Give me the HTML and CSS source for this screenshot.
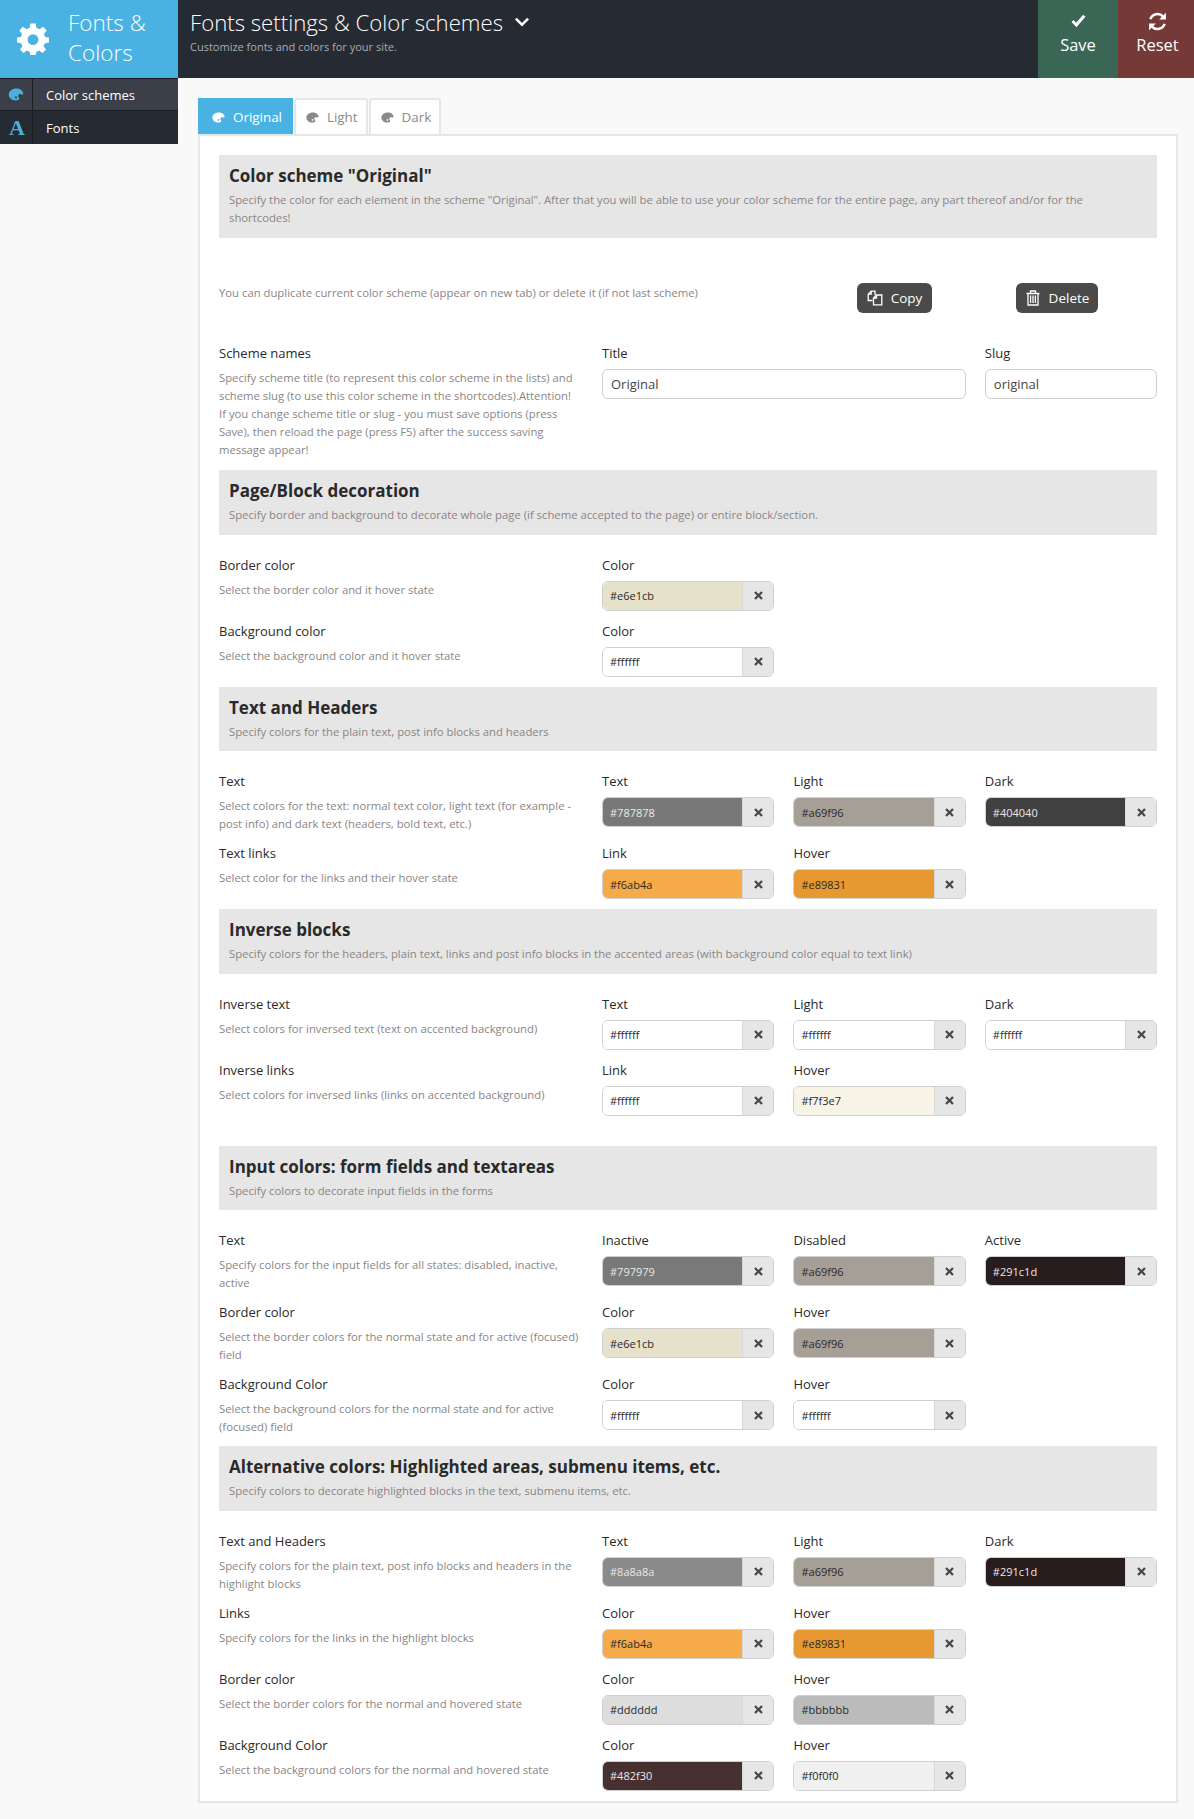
FILE: index.html
```html
<!doctype html>
<html>

<head>
    <meta charset="UTF-8">
    <meta name="viewport" content="width=device-width, initial-scale=1.0">
    <link rel="stylesheet" href="styles.css">
    <title>Fonts &amp; Colors</title>
</head>

<body>
    <svg class="icon-defs" width="0" height="0">
        <symbol id="palette" viewBox="0 0 16 14">
            <path fill-rule="evenodd" d="M8.5 0.5C12.6 0.5 15.6 2.9 15.8 6.2C15.9 7.2 14.8 7.3 14 6.9C12.8 6.3 11.2 6.4 10.6 7.5C10 8.6 10.6 9.6 11.2 10.5C11.8 11.5 11.3 12.6 10 13C9.2 13.3 8.4 13.4 7.6 13.4C3.4 13.4 0.2 10.6 0.2 7C0.2 3.4 3.9 0.5 8.5 0.5ZM8 9A1.1 1.1 0 1 0 8 11.2A1.1 1.1 0 1 0 8 9Z" />
        </symbol>
        <symbol id="cross" viewBox="0 0 10 10">
            <path d="M2 0.2L5 3.2L8 0.2L9.8 2L6.8 5L9.8 8L8 9.8L5 6.8L2 9.8L0.2 8L3.2 5L0.2 2Z" />
        </symbol>
    </svg>

    <header class="topbar">
        <div class="brand">
            <svg class="brand-gear" viewBox="0 0 32 32">
                <path fill-rule="evenodd" d="M13.4 0.5H18.6L19.5 4.9C20.6 5.2 21.6 5.7 22.5 6.2L26.3 3.7L29.6 7.4L26.9 10.9C27.4 11.8 27.8 12.8 28 13.9L32 14.6V19.4L27.8 20.2C27.5 21.2 27.1 22.2 26.5 23.1L29 26.6L25.6 30L22.1 27.5C21.2 28 20.3 28.4 19.3 28.7L18.6 32H13.4L12.7 28.7C11.7 28.4 10.7 28 9.9 27.5L6.4 30L3 26.6L5.5 23.1C4.9 22.2 4.5 21.2 4.2 20.2L0 19.4V14.6L4 13.9C4.2 12.8 4.6 11.8 5.1 10.9L2.4 7.4L5.7 3.7L9.5 6.2C10.4 5.7 11.4 5.2 12.5 4.9ZM16 11.2A5.4 5.4 0 1 0 16 22A5.4 5.4 0 1 0 16 11.2Z" />
            </svg>
            <div class="brand-name">Fonts &amp; Colors</div>
        </div>
        <div class="topbar-title">
            <h1>Fonts settings &amp; Color schemes
                <svg class="title-chevron" viewBox="0 0 14 10">
                    <path d="M1.8 0.8L7 6L12.2 0.8L14 2.6L7 9.6L0 2.6Z" />
                </svg>
            </h1>
            <p>Customize fonts and colors for your site.</p>
        </div>
        <button class="action action-save">
            <svg class="icon-check" viewBox="0 0 16 14">
                <path d="M5.8 13.6L0.6 8L2.8 5.9L5.5 8.8L13 0.4L15.4 2.4Z" />
            </svg>
            Save
        </button>
        <button class="action action-reset">
            <svg class="icon-reset" viewBox="0 0 20 20">
                <path d="M3.2 7.8A7.2 7.2 0 0 1 15.3 5.2M16.8 12.2A7.2 7.2 0 0 1 4.7 14.8" fill="none" stroke="#fff" stroke-width="2.4" />
                <path d="M18 1.6V8H11.6ZM2 18.4V12H8.4Z" />
            </svg>
            Reset
        </button>
    </header>

    <div class="layout">
        <nav class="sidebar">
            <a class="side-item active">
                <span class="side-icon"><svg class="palette"><use href="#palette" /></svg></span>
                <span class="side-label">Color schemes</span>
            </a>
            <a class="side-item">
                <span class="side-icon side-icon-font">A</span>
                <span class="side-label">Fonts</span>
            </a>
        </nav>

        <main class="content">
            <div class="tabs">
                <a class="tab active"><svg class="palette"><use href="#palette" /></svg>Original</a>
                <a class="tab"><svg class="palette"><use href="#palette" /></svg>Light</a>
                <a class="tab"><svg class="palette"><use href="#palette" /></svg>Dark</a>
            </div>

            <div class="panel">
                <section class="section-head">
                    <h2>Color scheme "Original"</h2>
                    <p>Specify the color for each element in the scheme "Original". After that you will be able to use your color scheme for the entire page, any part thereof and/or for the shortcodes!</p>
                </section>

                <div class="copy-row">
                    <span class="copy-note">You can duplicate current color scheme (appear on new tab) or delete it (if not last scheme)</span>
                    <button class="btn btn-copy">
                        <svg viewBox="0 0 16 16" fill="none" stroke="currentColor" stroke-width="1.3">
                            <path d="M5.5 10.5H1.2V4.2L4.2 1.2H8V5" />
                            <path d="M4.2 1.2V4.2H1.2" />
                            <path d="M6.5 14.8V8L9.5 5H14.8V14.8Z" />
                            <path d="M9.5 5V8H6.5" />
                        </svg>
                        Copy
                    </button>
                    <button class="btn btn-delete">
                        <svg viewBox="0 0 14 16" fill="none" stroke="currentColor" stroke-width="1.3">
                            <path d="M0.5 3.5H13.5M4.5 3.2V1H9.5V3.2M2 3.5V15H12V3.5M4.6 5.5V13M7 5.5V13M9.4 5.5V13" />
                        </svg>
                        Delete
                    </button>
                </div>

                <div class="row row-names">
                    <div class="row-info">
                        <div class="row-title">Scheme names</div>
                        <div class="row-desc">Specify scheme title (to represent this color scheme in the lists) and scheme slug (to use this color scheme in the shortcodes).Attention! If you change scheme title or slug - you must save options (press Save), then reload the page (press F5) after the success saving message appear!</div>
                    </div>
                    <div class="row-fields">
                        <div class="field field-wide">
                            <div class="field-label">Title</div>
                            <input class="text-input" value="Original">
                        </div>
                        <div class="field">
                            <div class="field-label">Slug</div>
                            <input class="text-input" value="original">
                        </div>
                    </div>
                </div>

                <section class="section-head">
                    <h2>Page/Block decoration</h2>
                    <p>Specify border and background to decorate whole page (if scheme accepted to the page) or entire block/section.</p>
                </section>
                <div class="section-body">
                    <div class="row">
                        <div class="row-info">
                            <div class="row-title">Border color</div>
                            <div class="row-desc">Select the border color and it hover state</div>
                        </div>
                        <div class="row-fields">
                            <div class="field">
                                <div class="field-label">Color</div>
                                <div class="color-field"><input class="color-input" value="#e6e1cb" style="background: #e6e1cb"><button class="clear"><svg><use href="#cross" /></svg></button></div>
                            </div>
                        </div>
                    </div>
                    <div class="row">
                        <div class="row-info">
                            <div class="row-title">Background color</div>
                            <div class="row-desc">Select the background color and it hover state</div>
                        </div>
                        <div class="row-fields">
                            <div class="field">
                                <div class="field-label">Color</div>
                                <div class="color-field"><input class="color-input" value="#ffffff" style="background: #ffffff"><button class="clear"><svg><use href="#cross" /></svg></button></div>
                            </div>
                        </div>
                    </div>
                </div>

                <section class="section-head">
                    <h2>Text and Headers</h2>
                    <p>Specify colors for the plain text, post info blocks and headers</p>
                </section>
                <div class="section-body">
                    <div class="row">
                        <div class="row-info">
                            <div class="row-title">Text</div>
                            <div class="row-desc">Select colors for the text: normal text color, light text (for example - post info) and dark text (headers, bold text, etc.)</div>
                        </div>
                        <div class="row-fields">
                            <div class="field">
                                <div class="field-label">Text</div>
                                <div class="color-field"><input class="color-input on-dark" value="#787878" style="background: #787878"><button class="clear"><svg><use href="#cross" /></svg></button></div>
                            </div>
                            <div class="field">
                                <div class="field-label">Light</div>
                                <div class="color-field"><input class="color-input" value="#a69f96" style="background: #a69f96"><button class="clear"><svg><use href="#cross" /></svg></button></div>
                            </div>
                            <div class="field">
                                <div class="field-label">Dark</div>
                                <div class="color-field"><input class="color-input on-dark" value="#404040" style="background: #404040"><button class="clear"><svg><use href="#cross" /></svg></button></div>
                            </div>
                        </div>
                    </div>
                    <div class="row">
                        <div class="row-info">
                            <div class="row-title">Text links</div>
                            <div class="row-desc">Select color for the links and their hover state</div>
                        </div>
                        <div class="row-fields">
                            <div class="field">
                                <div class="field-label">Link</div>
                                <div class="color-field"><input class="color-input" value="#f6ab4a" style="background: #f6ab4a"><button class="clear"><svg><use href="#cross" /></svg></button></div>
                            </div>
                            <div class="field">
                                <div class="field-label">Hover</div>
                                <div class="color-field"><input class="color-input" value="#e89831" style="background: #e89831"><button class="clear"><svg><use href="#cross" /></svg></button></div>
                            </div>
                        </div>
                    </div>
                </div>

                <section class="section-head">
                    <h2>Inverse blocks</h2>
                    <p>Specify colors for the headers, plain text, links and post info blocks in the accented areas (with background color equal to text link)</p>
                </section>
                <div class="section-body section-body-spaced">
                    <div class="row">
                        <div class="row-info">
                            <div class="row-title">Inverse text</div>
                            <div class="row-desc">Select colors for inversed text (text on accented background)</div>
                        </div>
                        <div class="row-fields">
                            <div class="field">
                                <div class="field-label">Text</div>
                                <div class="color-field"><input class="color-input" value="#ffffff" style="background: #ffffff"><button class="clear"><svg><use href="#cross" /></svg></button></div>
                            </div>
                            <div class="field">
                                <div class="field-label">Light</div>
                                <div class="color-field"><input class="color-input" value="#ffffff" style="background: #ffffff"><button class="clear"><svg><use href="#cross" /></svg></button></div>
                            </div>
                            <div class="field">
                                <div class="field-label">Dark</div>
                                <div class="color-field"><input class="color-input" value="#ffffff" style="background: #ffffff"><button class="clear"><svg><use href="#cross" /></svg></button></div>
                            </div>
                        </div>
                    </div>
                    <div class="row">
                        <div class="row-info">
                            <div class="row-title">Inverse links</div>
                            <div class="row-desc">Select colors for inversed links (links on accented background)</div>
                        </div>
                        <div class="row-fields">
                            <div class="field">
                                <div class="field-label">Link</div>
                                <div class="color-field"><input class="color-input" value="#ffffff" style="background: #ffffff"><button class="clear"><svg><use href="#cross" /></svg></button></div>
                            </div>
                            <div class="field">
                                <div class="field-label">Hover</div>
                                <div class="color-field"><input class="color-input" value="#f7f3e7" style="background: #f7f3e7"><button class="clear"><svg><use href="#cross" /></svg></button></div>
                            </div>
                        </div>
                    </div>
                </div>

                <section class="section-head">
                    <h2>Input colors: form fields and textareas</h2>
                    <p>Specify colors to decorate input fields in the forms</p>
                </section>
                <div class="section-body">
                    <div class="row">
                        <div class="row-info">
                            <div class="row-title">Text</div>
                            <div class="row-desc">Specify colors for the input fields for all states: disabled, inactive, active</div>
                        </div>
                        <div class="row-fields">
                            <div class="field">
                                <div class="field-label">Inactive</div>
                                <div class="color-field"><input class="color-input on-dark" value="#797979" style="background: #797979"><button class="clear"><svg><use href="#cross" /></svg></button></div>
                            </div>
                            <div class="field">
                                <div class="field-label">Disabled</div>
                                <div class="color-field"><input class="color-input" value="#a69f96" style="background: #a69f96"><button class="clear"><svg><use href="#cross" /></svg></button></div>
                            </div>
                            <div class="field">
                                <div class="field-label">Active</div>
                                <div class="color-field"><input class="color-input on-dark" value="#291c1d" style="background: #291c1d"><button class="clear"><svg><use href="#cross" /></svg></button></div>
                            </div>
                        </div>
                    </div>
                    <div class="row">
                        <div class="row-info">
                            <div class="row-title">Border color</div>
                            <div class="row-desc">Select the border colors for the normal state and for active (focused) field</div>
                        </div>
                        <div class="row-fields">
                            <div class="field">
                                <div class="field-label">Color</div>
                                <div class="color-field"><input class="color-input" value="#e6e1cb" style="background: #e6e1cb"><button class="clear"><svg><use href="#cross" /></svg></button></div>
                            </div>
                            <div class="field">
                                <div class="field-label">Hover</div>
                                <div class="color-field"><input class="color-input" value="#a69f96" style="background: #a69f96"><button class="clear"><svg><use href="#cross" /></svg></button></div>
                            </div>
                        </div>
                    </div>
                    <div class="row">
                        <div class="row-info">
                            <div class="row-title">Background Color</div>
                            <div class="row-desc">Select the background colors for the normal state and for active (focused) field</div>
                        </div>
                        <div class="row-fields">
                            <div class="field">
                                <div class="field-label">Color</div>
                                <div class="color-field"><input class="color-input" value="#ffffff" style="background: #ffffff"><button class="clear"><svg><use href="#cross" /></svg></button></div>
                            </div>
                            <div class="field">
                                <div class="field-label">Hover</div>
                                <div class="color-field"><input class="color-input" value="#ffffff" style="background: #ffffff"><button class="clear"><svg><use href="#cross" /></svg></button></div>
                            </div>
                        </div>
                    </div>
                </div>

                <section class="section-head">
                    <h2>Alternative colors: Highlighted areas, submenu items, etc.</h2>
                    <p>Specify colors to decorate highlighted blocks in the text, submenu items, etc.</p>
                </section>
                <div class="section-body">
                    <div class="row">
                        <div class="row-info">
                            <div class="row-title">Text and Headers</div>
                            <div class="row-desc">Specify colors for the plain text, post info blocks and headers in the highlight blocks</div>
                        </div>
                        <div class="row-fields">
                            <div class="field">
                                <div class="field-label">Text</div>
                                <div class="color-field"><input class="color-input on-dark" value="#8a8a8a" style="background: #8a8a8a"><button class="clear"><svg><use href="#cross" /></svg></button></div>
                            </div>
                            <div class="field">
                                <div class="field-label">Light</div>
                                <div class="color-field"><input class="color-input" value="#a69f96" style="background: #a69f96"><button class="clear"><svg><use href="#cross" /></svg></button></div>
                            </div>
                            <div class="field">
                                <div class="field-label">Dark</div>
                                <div class="color-field"><input class="color-input on-dark" value="#291c1d" style="background: #291c1d"><button class="clear"><svg><use href="#cross" /></svg></button></div>
                            </div>
                        </div>
                    </div>
                    <div class="row">
                        <div class="row-info">
                            <div class="row-title">Links</div>
                            <div class="row-desc">Specify colors for the links in the highlight blocks</div>
                        </div>
                        <div class="row-fields">
                            <div class="field">
                                <div class="field-label">Color</div>
                                <div class="color-field"><input class="color-input" value="#f6ab4a" style="background: #f6ab4a"><button class="clear"><svg><use href="#cross" /></svg></button></div>
                            </div>
                            <div class="field">
                                <div class="field-label">Hover</div>
                                <div class="color-field"><input class="color-input" value="#e89831" style="background: #e89831"><button class="clear"><svg><use href="#cross" /></svg></button></div>
                            </div>
                        </div>
                    </div>
                    <div class="row">
                        <div class="row-info">
                            <div class="row-title">Border color</div>
                            <div class="row-desc">Select the border colors for the normal and hovered state</div>
                        </div>
                        <div class="row-fields">
                            <div class="field">
                                <div class="field-label">Color</div>
                                <div class="color-field"><input class="color-input" value="#dddddd" style="background: #dddddd"><button class="clear"><svg><use href="#cross" /></svg></button></div>
                            </div>
                            <div class="field">
                                <div class="field-label">Hover</div>
                                <div class="color-field"><input class="color-input" value="#bbbbbb" style="background: #bbbbbb"><button class="clear"><svg><use href="#cross" /></svg></button></div>
                            </div>
                        </div>
                    </div>
                    <div class="row">
                        <div class="row-info">
                            <div class="row-title">Background Color</div>
                            <div class="row-desc">Select the background colors for the normal and hovered state</div>
                        </div>
                        <div class="row-fields">
                            <div class="field">
                                <div class="field-label">Color</div>
                                <div class="color-field"><input class="color-input on-dark" value="#482f30" style="background: #482f30"><button class="clear"><svg><use href="#cross" /></svg></button></div>
                            </div>
                            <div class="field">
                                <div class="field-label">Hover</div>
                                <div class="color-field"><input class="color-input" value="#f0f0f0" style="background: #f0f0f0"><button class="clear"><svg><use href="#cross" /></svg></button></div>
                            </div>
                        </div>
                    </div>
                </div>
            </div>
        </main>
    </div>
</body>

</html>
```

FILE: styles.css
```css
body {
    margin: 0;
    background: #f9f9f9;
    color: #2a2a2a;
    font-family: "Open Sans", sans-serif;
    font-size: 13px;
}

.icon-defs {
    display: block;
    height: 0;
}

.topbar {
    display: flex;
    height: 78px;
    background: #262a33;
    color: #fff;
}

.brand {
    display: flex;
    align-items: center;
    width: 178px;
    background: #4ab2e3;
    box-sizing: border-box;
    padding-left: 17px;
}

.brand-gear {
    width: 32px;
    height: 32px;
    fill: #fff;
    flex: none;
}

.brand-name {
    margin: -2px 0 0 19px;
    width: 92px;
    font-size: 22.5px;
    font-weight: 300;
    line-height: 30px;
}

.topbar-title {
    flex: 1;
    padding: 8px 0 0 12px;
}

.topbar-title h1 {
    margin: 0;
    font-size: 22.2px;
    font-weight: 300;
    line-height: 30px;
}

.title-chevron {
    width: 14px;
    height: 10px;
    fill: #fff;
    margin-left: 6px;
    vertical-align: 4px;
}

.topbar-title p {
    margin: 1px 0 0;
    font-size: 11px;
    color: #a9abb0;
}

.action {
    border: 0;
    padding: 11px 0 0;
    color: #fff;
    font-family: inherit;
    font-size: 16.5px;
    line-height: 22px;
    display: flex;
    flex-direction: column;
    align-items: center;
}

.action svg {
    fill: #fff;
}

.icon-check {
    width: 15px;
    height: 14px;
    margin: 3px 0 6px;
}

.icon-reset {
    width: 21px;
    height: 21px;
    margin-bottom: 2px;
}

.action-save {
    width: 80px;
    background: #3a6755;
}

.action-reset {
    width: 76px;
    padding-left: 3px;
    background: #753a38;
}

.layout {
    display: flex;
    align-items: flex-start;
}

.sidebar {
    width: 178px;
    flex: none;
    background: #262a33;
    color: #fff;
    box-sizing: border-box;
}

.side-item {
    display: flex;
    height: 33px;
    align-items: center;
    box-sizing: border-box;
}

.side-item.active {
    background: #3a3f4a;
    border-top: 1px solid #1a1d23;
    border-bottom: 1px solid #1a1d23;
}

.side-icon {
    width: 33px;
    height: 100%;
    display: flex;
    align-items: center;
    justify-content: center;
    border-right: 1px solid #1a1d23;
    box-sizing: border-box;
    color: #4ab2d8;
}

.side-icon .palette {
    width: 16px;
    height: 13px;
    fill: #4ab2d8;
}

.side-icon-font {
    padding-left: 2px;
    font-family: "Liberation Serif", serif;
    font-size: 22px;
    font-weight: bold;
}

.side-label {
    margin-left: 13px;
    font-size: 13px;
}

.content {
    flex: 1;
    padding: 20px 16px 15px 20px;
    min-width: 0;
}

.tabs {
    display: flex;
    gap: 1px;
    height: 36px;
}

.tab {
    display: flex;
    align-items: center;
    padding: 0 8px 0 10px;
    background: #fff;
    border: 2px solid #e6e6e6;
    border-bottom: 0;
    border-radius: 3px 3px 0 0;
    color: #8a8a8a;
    font-size: 13.4px;
}

.tab.active {
    background: #4ab2e3;
    border-color: #4ab2e3;
    border-radius: 0;
    color: #fff;
    padding: 0 9px 0 12px;
}

.tab .palette {
    width: 13px;
    height: 11px;
    fill: currentColor;
    margin-right: 8px;
}

.panel {
    background: #fff;
    border: 2px solid #e6e6e6;
    padding: 19px 19px 0;
}

.section-head {
    background: #e6e6e6;
    padding: 8px 10px 10.6px;
}

.section-head h2 {
    margin: 0;
    font-size: 17px;
    font-weight: 700;
    line-height: 25px;
    color: #2a2a2a;
}

.section-head p {
    margin: 3px 0 0;
    font-size: 11.3px;
    line-height: 18px;
    color: #8a8585;
}

.copy-row {
    display: flex;
    align-items: flex-start;
    margin: 45px 0 30px;
    height: 30px;
}

.copy-note {
    width: 638px;
    font-size: 11.3px;
    line-height: 20px;
    color: #8a8585;
}

.btn {
    display: flex;
    align-items: center;
    justify-content: center;
    gap: 8px;
    height: 30px;
    border: 0;
    border-radius: 6px;
    background: #4a4a4a;
    color: #fff;
    font-family: inherit;
    font-size: 13.5px;
}

.btn svg {
    width: 16px;
    height: 16px;
}

.btn-copy {
    width: 75px;
    margin-right: 84px;
}

.btn-delete {
    width: 82px;
}

.section-body {
    padding-top: 20px;
}

.section-body-spaced {
    padding-bottom: 20px;
}

.row {
    display: grid;
    grid-template-columns: 383px minmax(0, 1fr);
    padding-bottom: 10px;
}

.row-names {
    padding-bottom: 11.4px;
}

.row-info {
    padding-right: 22px;
}

.row-title {
    font-size: 13px;
    font-weight: 400;
    line-height: 20px;
    color: #2a2a2a;
}

.row-desc {
    margin-top: 6px;
    font-size: 11.3px;
    line-height: 18px;
    color: #8a8585;
}

.row-fields {
    display: grid;
    grid-template-columns: repeat(3, minmax(0, 1fr));
    column-gap: 19.3px;
}

.field-wide {
    grid-column: span 2;
}

.field-label {
    font-size: 13px;
    line-height: 20px;
    margin-bottom: 6px;
    color: #2a2a2a;
}

.text-input {
    display: block;
    width: 100%;
    height: 30px;
    box-sizing: border-box;
    border: 1px solid #cfcfcf;
    border-radius: 6px;
    padding: 0 8px;
    background: #fff;
    color: #444;
    font-family: inherit;
    font-size: 13px;
}

.color-field {
    display: flex;
    height: 30px;
    box-sizing: border-box;
    border: 1px solid #d0d0d0;
    border-radius: 6px;
    overflow: hidden;
}

.color-input {
    flex: 1;
    width: 0;
    min-width: 0;
    border: 0;
    padding: 0 7px;
    font-family: inherit;
    font-size: 11px;
    color: #2a2a2a;
}

.color-input.on-dark {
    color: #e8e8e8;
}

.clear {
    width: 31px;
    flex: none;
    border: 0;
    border-left: 1px solid #d8d8d8;
    padding: 0;
    background: #e6e6e6;
    display: flex;
    align-items: center;
    justify-content: center;
}

.clear svg {
    width: 9px;
    height: 9px;
    fill: #484848;
}
```
